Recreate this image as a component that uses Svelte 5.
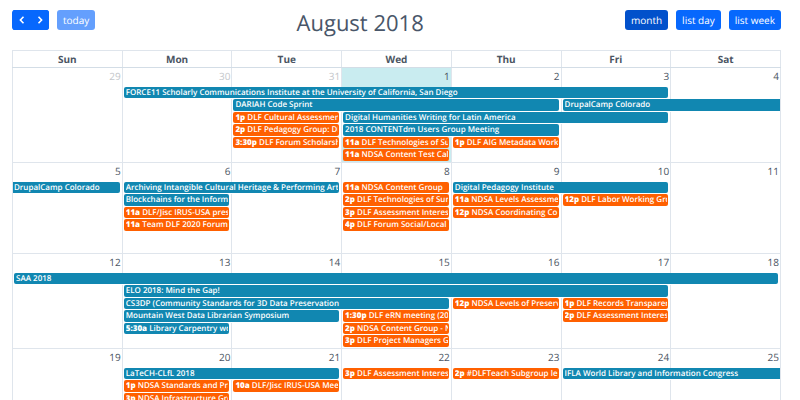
<script>
  const dayNames = ['Sun', 'Mon', 'Tue', 'Wed', 'Thu', 'Fri', 'Sat'];
  const views = ['month', 'list day', 'list week'];
  let view = $state('month');

  // Event: [first column, columns covered, start time, title, colour, edge it runs past]
  const weeks = [
    {
      days: [29, 30, 31, 1, 2, 3, 4],
      size: 'tall',
      lanes: [
        [[1, 5, '', 'FORCE11 Scholarly Communications Institute at the University of California, San Diego', 'teal']],
        [[2, 3, '', 'DARIAH Code Sprint', 'teal'], [5, 2, '', 'DrupalCamp Colorado', 'teal', 'to-next']],
        [[2, 1, '1p', 'DLF Cultural Assessmen', 'orange'], [3, 3, '', 'Digital Humanities Writing for Latin America', 'teal']],
        [[2, 1, '2p', 'DLF Pedagogy Group: DL', 'orange'], [3, 2, '', '2018 CONTENTdm Users Group Meeting', 'teal']],
        [[2, 1, '3:30p', 'DLF Forum Scholarsh', 'orange'], [3, 1, '11a', 'DLF Technologies of Su', 'orange'], [4, 1, '1p', 'DLF AIG Metadata Work', 'orange']],
        [[3, 1, '11a', 'NDSA Content Test Call', 'orange']]
      ]
    },
    {
      days: [5, 6, 7, 8, 9, 10, 11],
      size: 'short',
      lanes: [
        [[0, 1, '', 'DrupalCamp Colorado', 'teal', 'from-previous'], [1, 2, '', 'Archiving Intangible Cultural Heritage & Performing Arts', 'teal'], [3, 1, '11a', 'NDSA Content Group', 'orange'], [4, 2, '', 'Digital Pedagogy Institute', 'teal']],
        [[1, 1, '', 'Blockchains for the Informa', 'teal'], [3, 1, '2p', 'DLF Technologies of Surv', 'orange'], [4, 1, '11a', 'NDSA Levels Assessmen', 'orange'], [5, 1, '12p', 'DLF Labor Working Gro', 'orange']],
        [[1, 1, '11a', 'DLF/Jisc IRUS-USA pres', 'orange'], [3, 1, '3p', 'DLF Assessment Interes', 'orange'], [4, 1, '12p', 'NDSA Coordinating Co', 'orange']],
        [[1, 1, '11a', 'Team DLF 2020 Forum', 'orange'], [3, 1, '4p', 'DLF Forum Social/Local', 'orange']]
      ]
    },
    {
      days: [12, 13, 14, 15, 16, 17, 18],
      size: 'tall',
      lanes: [
        [[0, 7, '', 'SAA 2018', 'teal']],
        [[1, 5, '', 'ELO 2018: Mind the Gap!', 'teal']],
        [[1, 3, '', 'CS3DP (Community Standards for 3D Data Preservation', 'teal'], [4, 1, '12p', 'NDSA Levels of Preserv', 'orange'], [5, 1, '1p', 'DLF Records Transparen', 'orange']],
        [[1, 2, '', 'Mountain West Data Librarian Symposium', 'teal'], [3, 1, '1:30p', 'DLF eRN meeting (201', 'orange'], [5, 1, '2p', 'DLF Assessment Interes', 'orange']],
        [[1, 1, '5:30a', 'Library Carpentry wor', 'teal'], [3, 1, '2p', 'NDSA Content Group - N', 'orange']],
        [[3, 1, '3p', 'DLF Project Managers G', 'orange']]
      ]
    },
    {
      days: [19, 20, 21, 22, 23, 24, 25],
      size: 'tall',
      lanes: [
        [[1, 2, '', 'LaTeCH-CLfL 2018', 'teal'], [3, 1, '3p', 'DLF Assessment Interes', 'orange'], [4, 1, '2p', '#DLFTeach Subgroup le', 'orange'], [5, 2, '', 'IFLA World Library and Information Congress', 'teal', 'to-next']],
        [[1, 1, '1p', 'NDSA Standards and Pra', 'orange'], [2, 1, '10a', 'DLF/Jisc IRUS-USA Mee', 'orange']],
        [[1, 1, '3p', 'NDSA Infrastructure Gro', 'orange']]
      ]
    }
  ];

  // Turns a lane into table cells, with an empty cell for each free day.
  function cellsOf(lane) {
    const cells = [];
    let col = 0;
    for (const [start, span, time, title, colour, edge = ''] of lane) {
      while (col < start) cells.push({ col: col++, span: 1 });
      cells.push({ col, span, event: { time, title, colour, edge } });
      col += span;
    }
    while (col < 7) cells.push({ col: col++, span: 1 });
    return cells;
  }
</script>

<main>
  <header>
    <div class="tools">
      <div class="pager">
        <button aria-label="Previous month"><svg viewBox="0 0 10 10"><path d="M6.5 1.8 3.4 5l3.1 3.2" /></svg></button>
        <button aria-label="Next month"><svg viewBox="0 0 10 10"><path d="M3.5 1.8 6.6 5 3.5 8.2" /></svg></button>
      </div>
      <button disabled>today</button>
    </div>
    <h1>August 2018</h1>
    <div class="tools">
      {#each views as name}
        <button class:active={view === name} aria-pressed={view === name} onclick={() => (view = name)}>{name}</button>
      {/each}
    </div>
  </header>

  <table>
    <thead>
      <tr>
        {#each dayNames as name}<th scope="col">{name}</th>{/each}
      </tr>
    </thead>
    {#each weeks as week, w}
      <tbody class={week.size}>
        <tr class="numbers">
          {#each week.days as day, d}
            <td class:other={w === 0 && d < 3} class:today={w === 0 && d === 3}>{day}</td>
          {/each}
        </tr>
        {#each week.lanes as lane}
          <tr class="lane">
            {#each cellsOf(lane) as cell}
              <td colspan={cell.span} class:today={w === 0 && cell.col === 3 && cell.span === 1}>
                {#if cell.event}
                  <a href="#event" class="event {cell.event.colour} {cell.event.edge}">
                    <span>{#if cell.event.time}<b>{cell.event.time}</b>{' '}{/if}{cell.event.title}</span>
                  </a>
                {/if}
              </td>
            {/each}
          </tr>
        {/each}
        {#if week.lanes.length < 6}
          <tr class="rest">
            {#each week.days as _}<td></td>{/each}
          </tr>
        {/if}
      </tbody>
    {/each}
  </table>
</main>

<style>
  :global(body) {
    margin: 0;
    background: #fff;
  }
  main {
    height: 100vh;
    box-sizing: border-box;
    overflow: hidden;
    padding: 10px 19px 0 12px;
    font-family: 'Open Sans', sans-serif;
    font-size: 10px;
    color: #4b5563;
    text-rendering: geometricPrecision;
  }
  header {
    display: flex;
    justify-content: space-between;
    align-items: flex-start;
    height: 40px;
  }
  h1 {
    margin: 0;
    font-size: 22px;
    font-weight: 400;
    line-height: 26px;
    color: #495669;
  }
  .tools {
    display: flex;
    gap: 8px;
  }
  .pager {
    display: flex;
    padding-left: 1px;
    border-radius: 3px;
    background: #0768fd;
    overflow: hidden;
  }
  button {
    height: 20px;
    margin: 0;
    padding: 0 6px;
    border: 0;
    border-radius: 3px;
    background: #0768fd;
    color: #fff;
    font: inherit;
    line-height: 20px;
    text-rendering: inherit;
    cursor: pointer;
  }
  button:disabled {
    background: #649ffd;
    cursor: default;
  }
  button.active {
    background: #0251cb;
  }
  .pager button {
    display: flex;
    align-items: center;
    padding: 0 4px;
    border-radius: 0;
  }
  svg {
    width: 10px;
    height: 10px;
    fill: none;
    stroke: #fff;
    stroke-width: 1.6;
  }
  table {
    width: 100%;
    table-layout: fixed;
    border-collapse: collapse;
  }
  th,
  td {
    padding: 0;
    border: 0 solid #dfe5ec;
    border-width: 0 1px;
  }
  th {
    height: 16px;
    border-width: 1px;
    border-bottom-color: #d3dde6;
    line-height: 15px;
    font-weight: 700;
  }
  .numbers td {
    height: 19px;
    border-top-width: 1px;
    padding-right: 1px;
    text-align: right;
    vertical-align: top;
    line-height: 17px;
  }
  .numbers .other {
    color: #c4c7cb;
  }
  .today {
    background: #c9ecf0;
  }
  .lane td {
    height: 12px;
    vertical-align: top;
  }
  .lane:nth-child(odd) td {
    height: 13px;
  }
  .short .rest td {
    height: 21px;
  }
  .tall .rest td {
    height: 38px;
  }
  .event {
    display: block;
    height: 11px;
    margin: 0 2px 0 1px;
    padding: 0 1px 0 2px;
    border-radius: 2px;
    color: #fff;
    font-size: 8px;
    font-weight: 600;
    line-height: 12px;
    text-decoration: none;
  }
  .event b {
    font-weight: 800;
  }
  .event span {
    display: block;
    overflow: hidden;
    white-space: nowrap;
  }
  .lane:nth-child(odd) .event {
    height: 12px;
  }
  .teal {
    background: #1187b1;
  }
  .orange {
    background: #ff6000;
  }
  .to-next {
    margin-right: 0;
    border-top-right-radius: 0;
    border-bottom-right-radius: 0;
  }
  .from-previous {
    margin-left: 0;
    padding-left: 1px;
    border-top-left-radius: 0;
    border-bottom-left-radius: 0;
  }
</style>
